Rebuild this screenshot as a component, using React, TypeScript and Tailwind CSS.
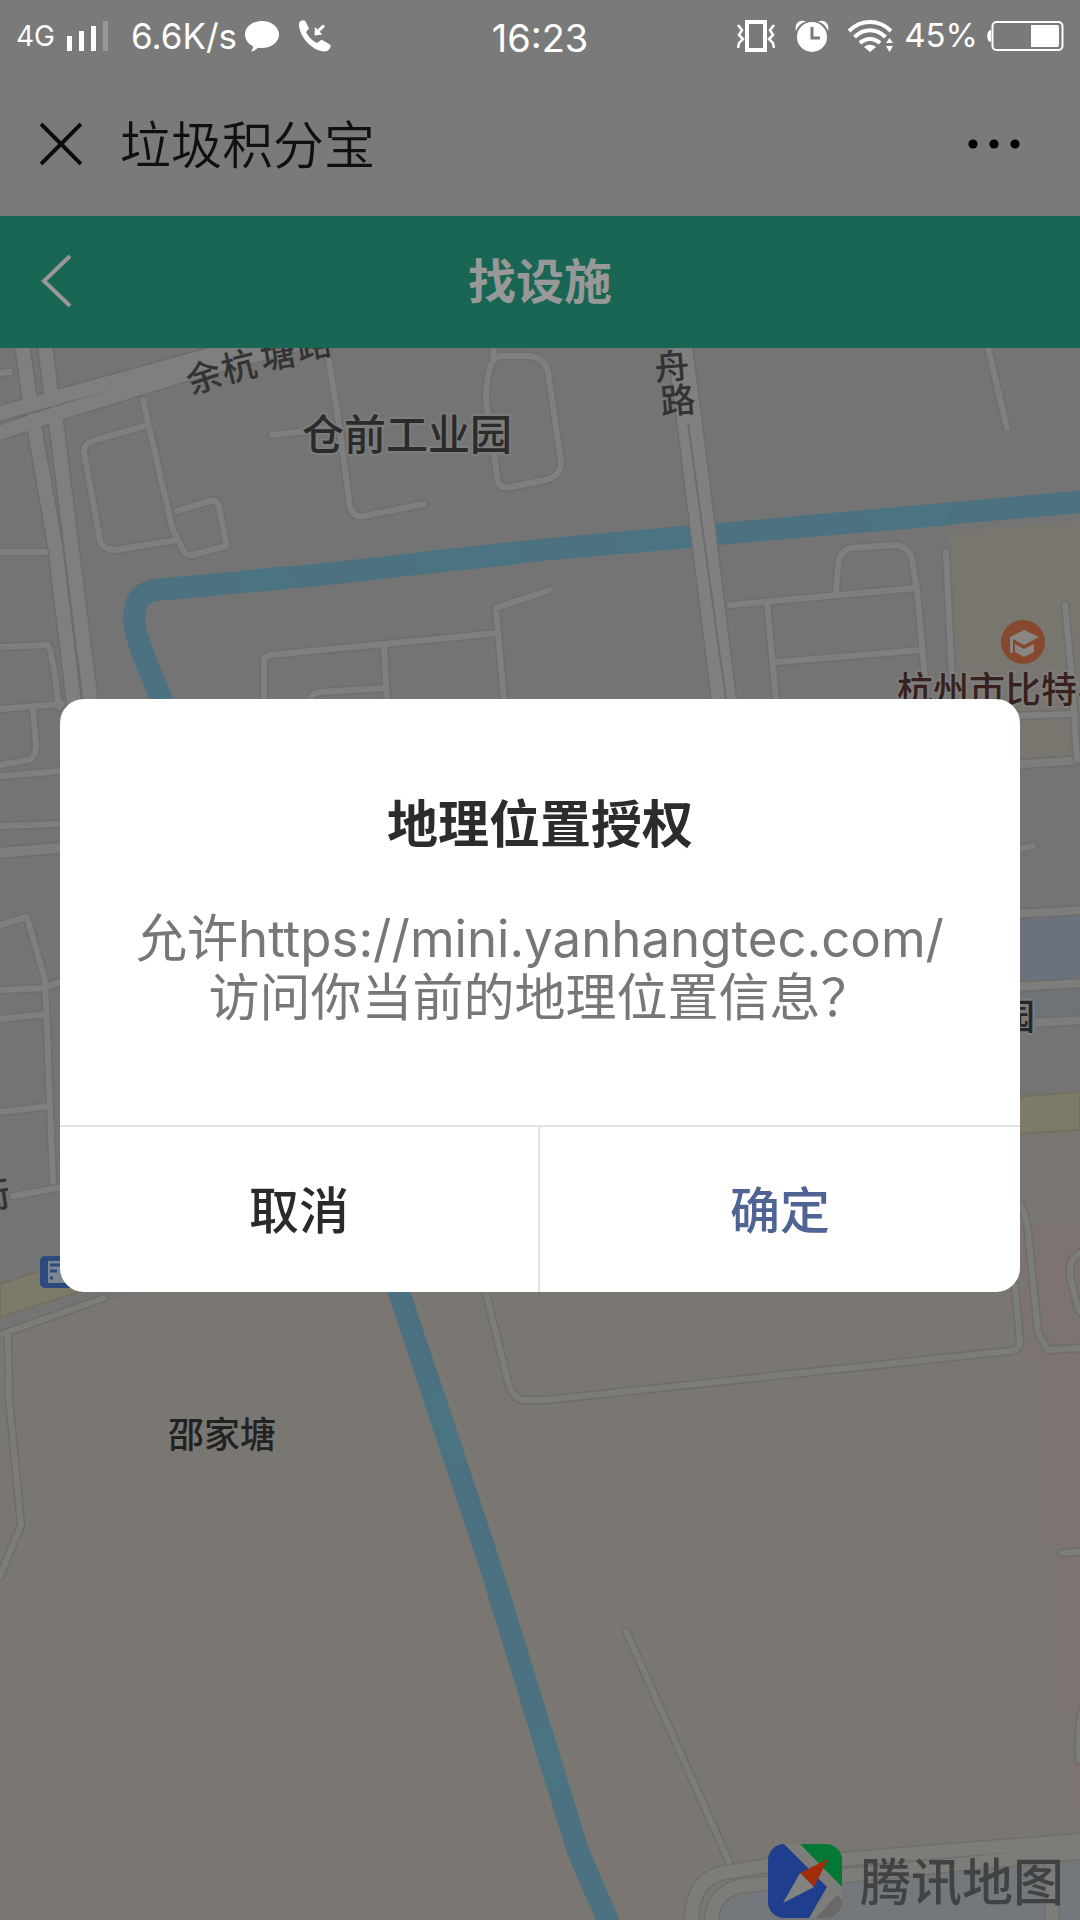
import { useState } from "react";

const FONT = "font-['Inter','Noto_Sans_CJK_SC',sans-serif]";

const MINOR_ROADS = [
  "M0 373L10 372",
  "M0 552H46",
  "M0 647L48 645Q52 650 59 707",
  "M0 709L62 704",
  "M33 709L36 745Q36 758 28 760L0 765",
  "M0 776L62 771",
  "M0 826L62 824",
  "M0 925L27 917L45 980L53 1182",
  "M0 990L45 988L62 981",
  "M0 1019L46 1014",
  "M0 1112L50 1106",
  "M13 1196L62 1187",
  "M143 400L172 527L183 550Q186 556 192 555L226 546V543L219 507Q217 499 210 501L177 511",
  "M145 426L95 440Q83 444 84 452L100 540Q102 549 115 550L177 540",
  "M327 350L337 410L350 507Q354 518 364 516L424 504",
  "M272 435L338 427",
  "M494 348L493 356M486 395Q488 357 500 356L530 356Q545 358 548 372L561 462Q562 475 546 480L510 487Q500 489 498 482L486 400Z",
  "M550 590L496 608L498 633L504 700",
  "M498 633L270 655Q264 656 264 662V700",
  "M384 645L387 700",
  "M310 700Q312 693 320 692L386 688",
  "M988 348L1007 428",
  "M730 605L916 588",
  "M836 593L838 566Q840 549 852 548L894 545Q909 546 912 560L917 590L927 700",
  "M767 603L776 700",
  "M776 662L922 650",
  "M946 552L953 700",
  "M1065 605L1072 680L1077 760",
  "M1010 716L1075 714",
  "M1020 849L1033 846",
];

const LOWER_ROADS = [
  "M484 1285L508 1382Q514 1400 524 1400H545L1010 1351Q1020 1350 1020 1342L1015 1285",
  "M1021 1205Q1028 1220 1029 1242L1038 1332L1048 1350L1080 1348",
  "M1084 1250L1074 1258Q1069 1264 1070 1276L1078 1308L1084 1316",
  "M104 1298L2 1334",
  "M8 1336L9 1398L21 1525L0 1576",
  "M1062 1553L1084 1551",
  "M1084 1705Q1078 1720 1079 1760",
  "M626 1631L735 1875",
];

type RoadsProps = { paths: string[]; fill: string; edge: string; width: number };

function Roads({ paths, fill, edge, width }: RoadsProps) {
  return (
    <g fill="none" strokeLinecap="round" strokeLinejoin="round">
      {paths.map((d) => <path key={d} d={d} stroke={edge} strokeWidth={width + 3} />)}
      {paths.map((d) => <path key={d} d={d} stroke={fill} strokeWidth={width} />)}
    </g>
  );
}

function StatusBar() {
  return (
    <div className="flex h-[72px] items-start justify-between px-4 pt-4 text-white">
      <div className="flex h-10 flex-1 items-center">
        <span className="text-[28px]">4G</span>
        <svg className="ml-3 h-8 w-[42px]" viewBox="0 0 42 32" fill="#fff">
          <path d="M0 16h5v15H0zM12 11h5v20h-5zM24 6h5v25h-5z" />
          <path d="M36 1h5v30h-5z" fill="#999" />
        </svg>
        <span className="ml-[22px] text-[35px]">6.6K/s</span>
        <svg className="ml-2 h-8 w-[34px]" viewBox="0 0 34 32" fill="#fff">
          <path d="M17 1C7.500 1 0 7 0 14.500c0 5 3 9 8 11.700 0 2-.6 3.500-2 5.300 3-.5 5-1.800 7-3.700 1.300.2 2.600.3 4 .3 9.500 0 17-6 17-13.500S26.500 1 17 1z" />
        </svg>
        <svg className="ml-5 h-8 w-8" viewBox="0 0 32 32" fill="#fff">
          <path d="M0 4C0 1 3 0 5 .3c1 .2 1.500 1 2 2l2.400 5c.5 1 .2 2-.6 2.800L7 12c2.500 5 6 8.500 11 11l3-2.300c.9-.7 2-.8 3-.2l6.500 3.700c1 .6 1.500 1.500 1 2.700-1 3-3.500 4.800-7 4.500C12 30 0 16 0 4z" />
          <path d="M15.500 15.500l.4-8.500 2.600 2.600L24 4.500l2 2-5.300 5.300 2.600 2.800z" />
        </svg>
      </div>
      <span className="text-[38px] leading-[44px]">16:23</span>
      <div className="flex h-10 flex-1 items-center justify-end">
        <svg className="h-8 w-[38px]" viewBox="0 0 38 32" fill="none" stroke="#fff">
          <path d="M10 2h18v28H10z" strokeWidth="4" />
          <path d="M1 5l4 5-3 5 4 4-4 4-1 5M37 5l-4 5 3 5-4 4 4 4 1 5" strokeWidth="2.500" />
        </svg>
        <svg className="ml-5 h-8 w-[34px]" viewBox="0 0 34 32">
          <circle cx="17" cy="17" r="15" fill="#fff" />
          <path d="M1 11C-1 3 5-1 11 1.500 6 3 3 6 1 11zM33 11C35 3 29-1 23 1.500 28 3 31 6 33 11z" fill="#fff" />
          <path d="M17 7v11h8" fill="none" stroke="#7a7a7a" strokeWidth="3" />
        </svg>
        <svg className="ml-[19px] h-8 w-[46px]" viewBox="0 0 46 32" fill="none" stroke="#fff" strokeWidth="4">
          <path d="M1 11C13-1 31-1 43 11" />
          <path d="M6.500 17C16 8 28 8 37.500 17" />
          <path d="M12 23c6-5.500 14-5.500 20 0" />
          <path d="M16 27c4-3 8-3 12 0l-6 5z" fill="#fff" stroke="none" />
          <path d="M38 23l3.500-5 3.500 5zM38 26h7l-3.500 6z" fill="#fff" stroke="none" />
        </svg>
        <span className="ml-[10px] text-[33px]">45%</span>
        <svg className="ml-2 h-8 w-[78px]" viewBox="0 0 78 32" fill="none">
          <path d="M5 10c-5 0-5 12 0 12z" fill="#fff" />
          <rect x="6.500" y="2" width="70" height="28" rx="4" stroke="#fff" strokeWidth="2" />
          <path d="M45 5h26q2 0 2 2v18q0 2-2 2H45z" fill="#fff" />
        </svg>
      </div>
    </div>
  );
}

function TitleBar() {
  return (
    <header className="flex h-36 items-center px-10">
      <button type="button" aria-label="关闭" className="text-[#0c0c0c]">
        <svg className="h-[42px] w-[42px]" viewBox="0 0 42 42" fill="none" stroke="currentColor" strokeWidth="4">
          <path d="M1 1l40 40M41 1L1 41" />
        </svg>
      </button>
      <h1 className="ml-[38px] flex-1 pt-1 text-[51px] leading-[60px] font-[350] text-[#101010]">垃圾积分宝</h1>
      <button type="button" aria-label="更多" className="mr-5">
        <svg className="h-10 w-[52px]" viewBox="0 0 52 40">
          <circle cx="5" cy="20" r="4.600" />
          <circle cx="26" cy="20" r="4.600" />
          <circle cx="47" cy="20" r="4.600" />
        </svg>
      </button>
    </header>
  );
}

function NavBar() {
  return (
    <nav className="grid h-[132px] grid-cols-[1fr_auto_1fr] items-center bg-[#1a6655] px-10 text-[#989898]">
      <button type="button" aria-label="返回" className="justify-self-start">
        <svg className="h-[54px] w-8" viewBox="0 0 32 54" fill="none" stroke="currentColor" strokeWidth="4">
          <path d="M30 1L4 26l26 25" />
        </svg>
      </button>
      <h2 className="text-[48px] leading-[60px] font-bold">找设施</h2>
    </nav>
  );
}

function MapDrawing() {
  return (
    <svg
      className="absolute inset-0 h-full w-full font-['Noto_Sans_CJK_SC',sans-serif]"
      viewBox="0 348 1080 1572"
      preserveAspectRatio="xMidYMin slice"
    >
      <rect y="348" width="1080" height="1572" fill="#747474" />
      {/* land use */}
      <path d="M950 532L1080 520V762L958 768z" fill="#78766e" />
      <path d="M1000 914L1080 908V980L1000 985z" fill="#6c727d" />
      <path d="M1000 988L1080 983V1014L1000 1020z" fill="#6d7376" />
      <path d="M0 1336L108 1300L1000 1132L1080 1128V1920H0z" fill="#7a7773" />
      <path d="M1018 1225H1080V1811H1070L1039 1484z" fill="#7d7370" />
      <path d="M716 1920L722 1902L760 1890L1080 1862V1920z" fill="#74777c" />

      {/* canal */}
      <path d="M1090 501L540 550L317 575L156 590Q128 594 136 632Q140 650 162 700L399 1292L427 1376L489 1562L578 1851L612 1930" fill="none" stroke="#4c7180" strokeWidth="22" />
      <path d="M240 582L290 577M420 563L520 553M620 543L720 534M870 521L950 514M432 1392L455 1461M540 1728L558 1787" fill="none" stroke="#4b7483" strokeWidth="22" />

      {/* main streets */}
      <Roads
        paths={["M-10 416L58 397L250 344L330 325", "M-10 436L62 412L182 375L340 332", "M20 330L30 400", "M43 330L52 400", "M33 420L55 545L76 720", "M55 414L93 720"]}
        fill="#7f7f7f"
        edge="#6c6c6c"
        width={14}
      />
      <Roads paths={["M679 340L690 425L724 700"]} fill="#808080" edge="#6d6d6d" width={24} />
      <path d="M688 423L704 540L726 700" stroke="#6c6c6c" strokeWidth="2" fill="none" />
      <Roads paths={["M-4 853L70 847"]} fill="#7e7e7e" edge="#6d6d6d" width={10} />
      <Roads paths={["M1010 765L1084 760", "M1010 914L1084 910", "M1010 987L1084 983", "M1010 1024L1084 1020"]} fill="#7d7d7b" edge="#6d6d6b" width={8} />
      <Roads paths={MINOR_ROADS} fill="#7f7f7f" edge="#6e6e6e" width={6} />

      <path d="M0 1284L80 1258V1292L0 1317z" fill="#7e7a69" stroke="#747060" strokeWidth="2" />
      <path d="M1000 1098L1080 1092V1130L1000 1135z" fill="#7e7a68" stroke="#747060" strokeWidth="2" />

      <Roads paths={LOWER_ROADS} fill="#7d7d78" edge="#6e6d69" width={6} />
      <Roads
        paths={["M692 1930Q688 1882 722 1873L770 1865L1084 1840", "M712 1930Q708 1894 740 1886L1084 1852", "M1052 1852V1930"]}
        fill="#7c7c79"
        edge="#6e6e6b"
        width={13}
      />

      {/* place names */}
      <g fill="#333" fontSize="35" fontWeight="500" textAnchor="middle">
        <text transform="translate(208 389) rotate(-18)">余</text>
        <text transform="translate(242 379) rotate(-14)">杭</text>
        <text transform="translate(280 367) rotate(-10)">塘</text>
        <text transform="translate(316 357) rotate(-10)">路</text>
        <text transform="translate(673 379) rotate(-5)">舟</text>
        <text transform="translate(679 413) rotate(-5)">路</text>
        <text transform="translate(-6 1208) rotate(-8)">街</text>
      </g>
      <g stroke="#7d7d7d" strokeWidth="4" paintOrder="stroke" strokeLinejoin="round">
        <text x="302" y="450" fontSize="42" fontWeight="500" fill="#2b2b2b">仓前工业园</text>
        <text x="897" y="703" fontSize="36" fontWeight="500" fill="#38211c">杭州市比特实</text>
        <text x="999" y="1030" fontSize="36" fontWeight="500" fill="#24282c">园</text>
        <text x="168" y="1448" fontSize="36" fontWeight="500" fill="#222" stroke="none">邵家塘</text>
      </g>

      {/* school pin */}
      <circle cx="1023" cy="642" r="22" fill="#86492f" />
      <path d="M1010 637l14-7 15 7-15 8-11-6v14h-3zM1015 644l9 5 10-5v8l-10 5-9-5z" fill="#8a8683" />

      {/* bus stop */}
      <rect x="40" y="1256" width="36" height="32" rx="5" fill="#2c4a7e" />
      <path d="M48 1261h24v22H48z" fill="#7c8792" />
      <path d="M50 1265h20M50 1271h7M50 1278h3" stroke="#2c4a7e" strokeWidth="3" />
    </svg>
  );
}

function MapCredit() {
  return (
    <div className="absolute right-4 bottom-[2px] flex items-center gap-[18px]">
      <svg className="h-[74px] w-[74px]" viewBox="0 0 74 74">
        <defs>
          <clipPath id="badge">
            <rect width="74" height="74" rx="16" />
          </clipPath>
        </defs>
        <g clipPath="url(#badge)">
          <rect width="74" height="74" fill="#7d7d7a" />
          <path d="M0 0h16l43 43-18 31H0z" fill="#1f3f8e" />
          <path d="M32 0h42v43z" fill="#057835" />
          <path d="M69 51l5 5v18H48z" fill="#696969" />
        </g>
        <path d="M60 15L32 29l14 14z" fill="#a32c09" />
        <path d="M32 29L15 59l31-16z" fill="#828280" />
      </svg>
      <span className="pt-1 text-[51px] leading-[60px] font-medium text-[#414343]">腾讯地图</span>
    </div>
  );
}

function LocationDialog({ onClose }: { onClose: () => void }) {
  return (
    <div className="fixed inset-0 flex items-center justify-center px-[60px] pt-[70px]">
      <div role="dialog" aria-modal="true" aria-labelledby="dialog-title" className="w-full overflow-hidden rounded-3xl bg-white">
        <div className="px-10 pt-[90px] pb-[98px] text-center">
          <h2 id="dialog-title" className="text-[51px] leading-[72px] font-bold text-[#2c2c2c]">地理位置授权</h2>
          <p className="mt-12 text-[51px] leading-[59px] font-normal text-[#777]">
            允许https://mini.yanhangtec.com/
            <br />
            访问你当前的地理位置信息？
          </p>
        </div>
        <div className="grid h-[167px] grid-cols-2 border-t-2 border-[#e2e2e2] text-[50px] font-medium">
          <button type="button" onClick={onClose} className="border-r-2 border-[#e2e2e2] pt-1 text-[#2a2a2a]">取消</button>
          <button type="button" onClick={onClose} className="pt-1 text-[#4f6494]">确定</button>
        </div>
      </div>
    </div>
  );
}

export default function App() {
  const [asking, setAsking] = useState(true);

  return (
    <div className={`flex min-h-screen flex-col bg-[#7a7a7a] ${FONT}`}>
      <StatusBar />
      <TitleBar />
      <NavBar />
      <main className="relative flex-1 overflow-hidden">
        <MapDrawing />
        <MapCredit />
      </main>
      {asking && <LocationDialog onClose={() => setAsking(false)} />}
    </div>
  );
}
